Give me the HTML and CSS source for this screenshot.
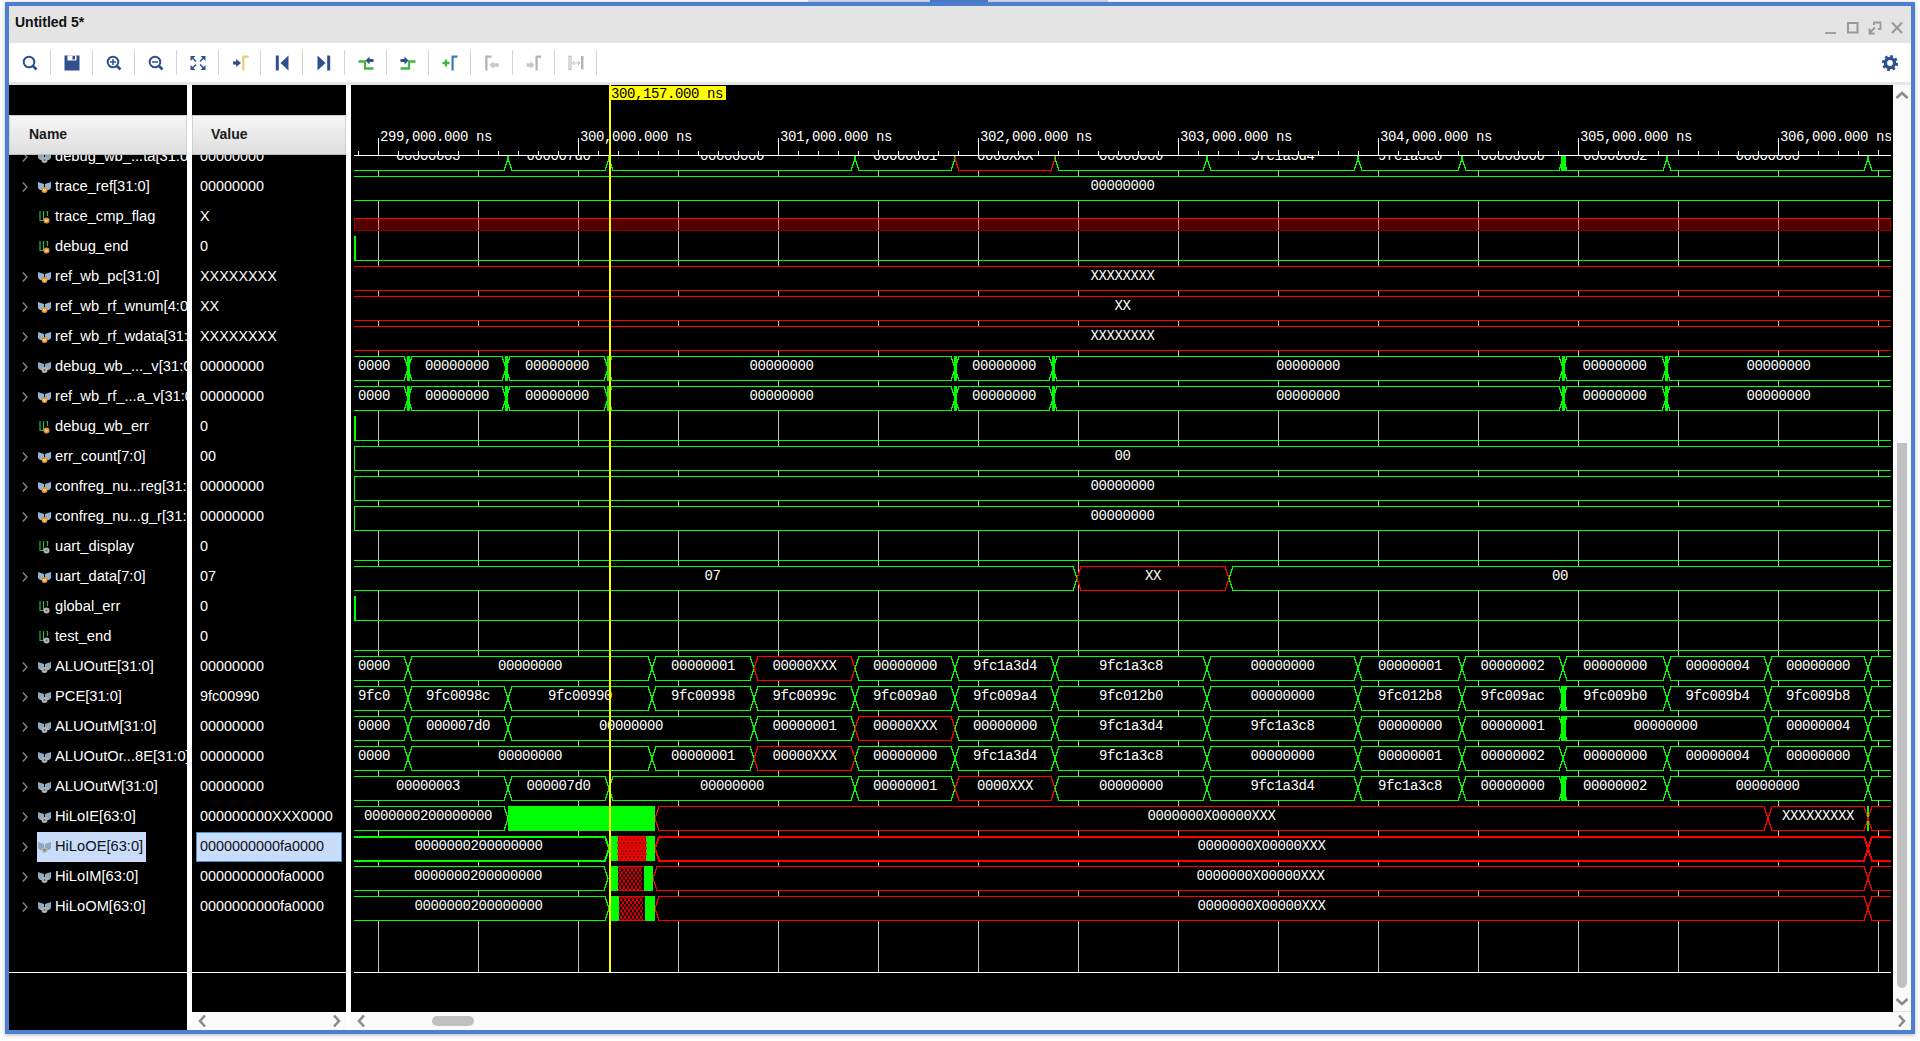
FILE: index.html
```html
<!DOCTYPE html>
<html>
<head>
    <title>Untitled 5*</title>
    <link rel="stylesheet" href="styles.css">
</head>
<body>
    <svg class="defs">
        <symbol id="bus" viewBox="0 0 13 11">
            <path d="M0 0 L6 2 V8 H2 L0 6Z M13 0 L7 2 V8 H11 L13 6Z" fill="#8fb4d4"/>
            <circle cx="6.5" cy="8" r="3" fill="#e8922a"/>
            <path d="M5.3 7 L6.5 9.3 L7.7 7" fill="none" stroke="#fff" stroke-width=".8"/>
        </symbol>
        <symbol id="bus-g" viewBox="0 0 13 11">
            <path d="M0 0 L6 2 V8 H2 L0 6Z M13 0 L7 2 V8 H11 L13 6Z" fill="#8fa8bc"/>
            <circle cx="6.5" cy="8" r="3" fill="#b4b4b4"/>
            <circle cx="6.5" cy="8" r="1" fill="#666"/>
        </symbol>
        <symbol id="bit" viewBox="0 0 13 13">
            <path d="M2 0 V9.5 H5.5 V0 M8 0 H9.5 V5" fill="none" stroke="#35b04a" stroke-width="1.2"/>
            <circle cx="8.5" cy="9.5" r="3" fill="#e8922a"/>
            <path d="M7.3 8.5 L8.5 10.8 L9.7 8.5" fill="none" stroke="#fff" stroke-width=".8"/>
        </symbol>
        <symbol id="bit-g" viewBox="0 0 13 13">
            <path d="M2 0 V9.5 H5.5 V0 M8 0 H9.5 V5" fill="none" stroke="#35b04a" stroke-width="1.2"/>
            <circle cx="8.5" cy="9.5" r="3" fill="#b4b4b4"/>
            <circle cx="8.5" cy="9.5" r="1" fill="#666"/>
        </symbol>
        <symbol id="chev-r" viewBox="0 0 6 10">
            <path d="M.8 .5 L5 5 L.8 9.5" fill="none" stroke="#8a8a8a" stroke-width="1.3"/>
        </symbol>
        <symbol id="sb-l" viewBox="0 0 10 14">
            <path d="M8 1.5 L3 7 L8 12.5" fill="none" stroke="#8a8a8a" stroke-width="2.6"/>
        </symbol>
        <symbol id="sb-r" viewBox="0 0 10 14">
            <path d="M2 1.5 L7 7 L2 12.5" fill="none" stroke="#8a8a8a" stroke-width="2.6"/>
        </symbol>
        <symbol id="sb-u" viewBox="0 0 14 10">
            <path d="M1.5 8 L7 3 L12.5 8" fill="none" stroke="#8a8a8a" stroke-width="2.6"/>
        </symbol>
        <symbol id="sb-d" viewBox="0 0 14 10">
            <path d="M1.5 2 L7 7 L12.5 2" fill="none" stroke="#8a8a8a" stroke-width="2.6"/>
        </symbol>
    </svg>

    <div class="topstrip"><div class="tab"><div class="tab-on"></div></div></div>

    <div class="window">
        <div class="titlebar">
            <span class="title">Untitled 5*</span>
            <svg class="winctl" width="78" height="14" viewBox="0 0 78 14">
                <path d="M0 12 H11" stroke="#a0a0a0" stroke-width="2"/>
                <rect x="23" y="2" width="9.5" height="9.5" fill="none" stroke="#999" stroke-width="2"/>
                <path d="M49 4 V1.5 H55.5 V8 H53 M44.5 12 L50 6.5 M44.5 7.5 V12.5 H49.5" fill="none" stroke="#999" stroke-width="1.8"/>
                <path d="M67 1.5 L77 12 M77 1.5 L67 12" stroke="#999" stroke-width="2"/>
            </svg>
        </div>

        <div class="toolbar">
            <div class="tool"><svg viewBox="0 0 20 20"><circle cx="9" cy="9" r="5.3" class="ic-line"/><path d="M13 13 L16.5 16.5" class="ic-line thick"/></svg></div>
            <div class="tool"><svg viewBox="0 0 20 20"><rect x="2.5" y="2.5" width="15" height="15" fill="#2f4f8f"/><rect x="5.5" y="2.5" width="9" height="5" fill="#fff"/><rect x="10.5" y="3" width="2.5" height="3.5" fill="#2f4f8f"/></svg></div>
            <div class="tool"><svg viewBox="0 0 20 20"><circle cx="9" cy="9" r="5.3" class="ic-line"/><path d="M13 13 L16.5 16.5" class="ic-line thick"/><path d="M6 9 H12 M9 6 V12" class="ic-line thin"/></svg></div>
            <div class="tool"><svg viewBox="0 0 20 20"><circle cx="9" cy="9" r="5.3" class="ic-line"/><path d="M13 13 L16.5 16.5" class="ic-line thick"/><path d="M6 9 H12" class="ic-line thin"/></svg></div>
            <div class="tool"><svg viewBox="0 0 20 20"><path d="M2.5 3 H7.5 L2.5 8Z M17.5 3 H12.5 L17.5 8Z M2.5 17 H7.5 L2.5 12Z M17.5 17 H12.5 L17.5 12Z" fill="#2f4f8f"/><path d="M4 4.5 L8 8.5 M16 4.5 L12 8.5 M4 15.5 L8 11.5 M16 15.5 L12 11.5" class="ic-line thin"/></svg></div>
            <div class="tool"><svg viewBox="0 0 20 20"><path d="M3 8.5 H6 V6 L11 10 L6 14 V11.5 H3Z" fill="#2f4f8f"/><path d="M12.2 2.5 H18.7 V4.8 H14.5 V17.5 H12.2Z" fill="#e8d070"/></svg></div>
            <div class="tool"><svg viewBox="0 0 20 20"><rect x="3.8" y="2.5" width="3" height="15" fill="#2f4f8f"/><path d="M8.5 10 L16.5 2.5 V17.5Z" fill="#2f4f8f"/></svg></div>
            <div class="tool"><svg viewBox="0 0 20 20"><rect x="13.2" y="2.5" width="3" height="15" fill="#2f4f8f"/><path d="M11.5 10 L3.5 2.5 V17.5Z" fill="#2f4f8f"/></svg></div>
            <div class="tool"><svg viewBox="0 0 20 20"><path d="M2.5 8.5 H9 V15.5 H17.5" fill="none" stroke="#44b53c" stroke-width="2.3"/><path d="M9.5 7.5 L13.5 3.5 V6 H17.5 V9 H13.5 V11.5Z" fill="#2f4f8f"/></svg></div>
            <div class="tool"><svg viewBox="0 0 20 20"><path d="M2.5 15.5 H11 V8.5 H17.5" fill="none" stroke="#44b53c" stroke-width="2.3"/><path d="M10.5 7.5 L6.5 3.5 V6 H2.5 V9 H6.5 V11.5Z" fill="#2f4f8f"/></svg></div>
            <div class="tool"><svg viewBox="0 0 20 20"><path d="M2.5 10 H9.5 M6 6.5 V13.5" fill="none" stroke="#44b53c" stroke-width="2.3"/><path d="M11.5 2.5 H17.5 V4.8 H13.7 V17.5 H11.5Z" fill="#3c7db8"/></svg></div>
            <div class="tool"><svg viewBox="0 0 20 20"><path d="M3.2 2.5 H9.5 V4.8 H5.5 V17.5 H3.2Z" fill="#b4b4b4"/><path d="M7.5 12 L11.5 8 V10.3 H16.8 V13.7 H11.5 V16Z" fill="#c8c8c8"/></svg></div>
            <div class="tool"><svg viewBox="0 0 20 20"><path d="M11.5 2.5 H17.2 V4.8 H13.7 V17.5 H11.5Z" fill="#b4b4b4"/><path d="M10.5 12 L6.5 8 V10.3 H2.5 V13.7 H6.5 V16Z" fill="#c8c8c8"/></svg></div>
            <div class="tool"><svg viewBox="0 0 20 20"><rect x="3" y="3.2" width="2" height="13.3" fill="none" stroke="#b4b4b4"/><rect x="15" y="3" width="2.5" height="13.5" fill="#b4b4b4"/><path d="M6.5 10 H14 M8.5 8 L6.5 10 L8.5 12 M12 8 L14 10 L12 12" fill="none" stroke="#c0c0c0"/></svg></div>
            <div class="tool-gear">
                <svg viewBox="0 0 20 20"><circle cx="10" cy="10" r="4.6" fill="none" stroke="#2f4f8f" stroke-width="3.4"/><circle cx="10" cy="10" r="6.8" fill="none" stroke="#2f4f8f" stroke-width="2.6" stroke-dasharray="2.7 2.64"/></svg>
            </div>
        </div>
        <div class="band"></div>

        <div class="main">
            <div class="col col-name">
                <div class="col-top"></div>
                <div class="col-head">Name</div>
                <div class="col-list">
                    <div class="rows">
                        <div class="row"><svg class="chev"><use href="#chev-r"/></svg><span class="lab"><svg class="ico"><use href="#bus-g"/></svg>debug_wb_...ta[31:0]</span></div>
                        <div class="row"><svg class="chev"><use href="#chev-r"/></svg><span class="lab"><svg class="ico"><use href="#bus"/></svg>trace_ref[31:0]</span></div>
                        <div class="row"><span class="chev"></span><span class="lab"><svg class="ico"><use href="#bit"/></svg>trace_cmp_flag</span></div>
                        <div class="row"><span class="chev"></span><span class="lab"><svg class="ico"><use href="#bit"/></svg>debug_end</span></div>
                        <div class="row"><svg class="chev"><use href="#chev-r"/></svg><span class="lab"><svg class="ico"><use href="#bus"/></svg>ref_wb_pc[31:0]</span></div>
                        <div class="row"><svg class="chev"><use href="#chev-r"/></svg><span class="lab"><svg class="ico"><use href="#bus"/></svg>ref_wb_rf_wnum[4:0]</span></div>
                        <div class="row"><svg class="chev"><use href="#chev-r"/></svg><span class="lab"><svg class="ico"><use href="#bus"/></svg>ref_wb_rf_wdata[31:0]</span></div>
                        <div class="row"><svg class="chev"><use href="#chev-r"/></svg><span class="lab"><svg class="ico"><use href="#bus-g"/></svg>debug_wb_..._v[31:0]</span></div>
                        <div class="row"><svg class="chev"><use href="#chev-r"/></svg><span class="lab"><svg class="ico"><use href="#bus"/></svg>ref_wb_rf_...a_v[31:0]</span></div>
                        <div class="row"><span class="chev"></span><span class="lab"><svg class="ico"><use href="#bit"/></svg>debug_wb_err</span></div>
                        <div class="row"><svg class="chev"><use href="#chev-r"/></svg><span class="lab"><svg class="ico"><use href="#bus"/></svg>err_count[7:0]</span></div>
                        <div class="row"><svg class="chev"><use href="#chev-r"/></svg><span class="lab"><svg class="ico"><use href="#bus"/></svg>confreg_nu...reg[31:0]</span></div>
                        <div class="row"><svg class="chev"><use href="#chev-r"/></svg><span class="lab"><svg class="ico"><use href="#bus"/></svg>confreg_nu...g_r[31:0]</span></div>
                        <div class="row"><span class="chev"></span><span class="lab"><svg class="ico"><use href="#bit-g"/></svg>uart_display</span></div>
                        <div class="row"><svg class="chev"><use href="#chev-r"/></svg><span class="lab"><svg class="ico"><use href="#bus"/></svg>uart_data[7:0]</span></div>
                        <div class="row"><span class="chev"></span><span class="lab"><svg class="ico"><use href="#bit-g"/></svg>global_err</span></div>
                        <div class="row"><span class="chev"></span><span class="lab"><svg class="ico"><use href="#bit-g"/></svg>test_end</span></div>
                        <div class="row"><svg class="chev"><use href="#chev-r"/></svg><span class="lab"><svg class="ico"><use href="#bus-g"/></svg>ALUOutE[31:0]</span></div>
                        <div class="row"><svg class="chev"><use href="#chev-r"/></svg><span class="lab"><svg class="ico"><use href="#bus-g"/></svg>PCE[31:0]</span></div>
                        <div class="row"><svg class="chev"><use href="#chev-r"/></svg><span class="lab"><svg class="ico"><use href="#bus-g"/></svg>ALUOutM[31:0]</span></div>
                        <div class="row"><svg class="chev"><use href="#chev-r"/></svg><span class="lab"><svg class="ico"><use href="#bus-g"/></svg>ALUOutOr...8E[31:0]</span></div>
                        <div class="row"><svg class="chev"><use href="#chev-r"/></svg><span class="lab"><svg class="ico"><use href="#bus-g"/></svg>ALUOutW[31:0]</span></div>
                        <div class="row"><svg class="chev"><use href="#chev-r"/></svg><span class="lab"><svg class="ico"><use href="#bus-g"/></svg>HiLoIE[63:0]</span></div>
                        <div class="row"><svg class="chev"><use href="#chev-r"/></svg><span class="lab selected"><svg class="ico"><use href="#bus-g"/></svg>HiLoOE[63:0]</span></div>
                        <div class="row"><svg class="chev"><use href="#chev-r"/></svg><span class="lab"><svg class="ico"><use href="#bus-g"/></svg>HiLoIM[63:0]</span></div>
                        <div class="row"><svg class="chev"><use href="#chev-r"/></svg><span class="lab"><svg class="ico"><use href="#bus-g"/></svg>HiLoOM[63:0]</span></div>
                    </div>
                </div>
                <div class="col-foot"></div>
            </div>

            <div class="col col-value">
                <div class="col-top"></div>
                <div class="col-head">Value</div>
                <div class="col-list">
                    <div class="rows">
                        <div class="val">00000000</div>
                        <div class="val">00000000</div>
                        <div class="val">X</div>
                        <div class="val">0</div>
                        <div class="val">XXXXXXXX</div>
                        <div class="val">XX</div>
                        <div class="val">XXXXXXXX</div>
                        <div class="val">00000000</div>
                        <div class="val">00000000</div>
                        <div class="val">0</div>
                        <div class="val">00</div>
                        <div class="val">00000000</div>
                        <div class="val">00000000</div>
                        <div class="val">0</div>
                        <div class="val">07</div>
                        <div class="val">0</div>
                        <div class="val">0</div>
                        <div class="val">00000000</div>
                        <div class="val">9fc00990</div>
                        <div class="val">00000000</div>
                        <div class="val">00000000</div>
                        <div class="val">00000000</div>
                        <div class="val">000000000XXX0000</div>
                        <div class="val selected">0000000000fa0000</div>
                        <div class="val">0000000000fa0000</div>
                        <div class="val">0000000000fa0000</div>
                    </div>
                </div>
                <div class="col-foot"></div>
                <div class="hscroll hscroll-val">
                    <svg class="sb-h"><use href="#sb-l"/></svg>
                    <svg class="sb-h"><use href="#sb-r"/></svg>
                </div>
            </div>

            <div class="col col-wave">
                <svg id="wave" width="1542" height="927" viewBox="351 85 1542 927"></svg>
                <div class="hscroll hscroll-wave">
                    <svg class="sb-h"><use href="#sb-l"/></svg>
                    <div class="thumb-h"></div>
                </div>
            </div>

            <div class="vscroll">
                <svg class="sb-v"><use href="#sb-u"/></svg>
                <div class="thumb-v"></div>
                <svg class="sb-v sb-down"><use href="#sb-d"/></svg>
                <div class="corner"><svg class="sb-h"><use href="#sb-r"/></svg></div>
            </div>
        </div>
    </div>

    <script src="wave.js"></script>
</body>
</html>
```
FILE: styles.css
```css
* {
    margin: 0;
    padding: 0;
    box-sizing: border-box;
}

html, body {
    width: 100%;
    height: 100%;
    overflow: hidden;
}

body {
    background-color: #ffffff;
    font-family: "Liberation Sans", Arial, sans-serif;
    font-size: 14px;
}

.defs {
    display: none;
}

.topstrip {
    height: 2px;
}

.tab {
    width: 300px;
    height: 2px;
    margin-left: 808px;
    background-color: #d4dcec;
}

.tab-on {
    width: 58px;
    height: 2px;
    margin-left: 122px;
    background-color: #4a7fd0;
}

.window {
    width: 1910px;
    height: 1032px;
    margin-left: 5px;
    border: 4px solid #4c7fd0;
    display: flex;
    flex-direction: column;
    box-shadow: 0 1px 4px rgba(0, 0, 0, 0.3);
}

.titlebar {
    height: 37px;
    flex: none;
    background-color: #e4e4e4;
    display: flex;
    justify-content: space-between;
    padding: 0 8px 0 6px;
}

.title {
    line-height: 32px;
    font-weight: bold;
    color: #111111;
}

.winctl {
    margin-top: 15px;
}

.toolbar {
    height: 39px;
    flex: none;
    background-color: #ffffff;
    display: flex;
    align-items: center;
}

.tool {
    width: 42px;
    height: 25px;
    flex: none;
    border-right: 1px solid #d4d4d4;
    display: flex;
    align-items: center;
    justify-content: center;
}

.tool svg, .tool-gear svg {
    width: 20px;
    height: 20px;
    flex: none;
}

.tool-gear {
    margin-left: auto;
    margin-right: 11px;
    height: 20px;
}

.ic-line {
    fill: none;
    stroke: #2f4f8f;
    stroke-width: 2;
}

.ic-line.thick {
    stroke-width: 2.6;
}

.ic-line.thin {
    stroke-width: 1.5;
}

.band {
    height: 3px;
    flex: none;
    background-color: #e6e6e6;
}

.main {
    flex: 1;
    min-height: 0;
    display: flex;
    background-color: #ffffff;
}

.col {
    display: flex;
    flex-direction: column;
    flex: none;
}

.col-name {
    width: 178px;
    margin-right: 5px;
    background-color: #000000;
}

.col-value {
    width: 154px;
    margin-right: 5px;
    background-color: #000000;
}

.col-wave {
    width: 1542px;
    background-color: #000000;
}

.col-top {
    height: 30px;
    flex: none;
}

.col-head {
    height: 40px;
    flex: none;
    line-height: 36px;
    font-weight: bold;
    color: #1a1a1a;
    background: linear-gradient(#f6f6f6, #dedede);
    border: 1px solid #d0d0d0;
    border-bottom-color: #bdbdbd;
}

.col-name .col-head {
    padding-left: 19px;
}

.col-value .col-head {
    padding-left: 18px;
}

.col-list {
    height: 817px;
    flex: none;
    overflow: hidden;
}

.rows {
    margin-top: -13px;
    color: #ffffff;
}

.col-foot {
    flex: 1;
    border-top: 1px solid #ffffff;
}

.row {
    height: 30px;
    display: flex;
    align-items: center;
    white-space: nowrap;
    font-size: 14.7px;
}

.chev {
    width: 6px;
    height: 10px;
    flex: none;
    margin-left: 13px;
}

.lab {
    height: 30px;
    margin-left: 9px;
    padding: 0 3px 2px 1px;
    display: flex;
    align-items: center;
}

.lab.selected {
    background-color: #c9ddfb;
    color: #111111;
}

.ico {
    width: 13px;
    height: 13px;
    flex: none;
    margin-top: 2px;
    margin-right: 4px;
}

.val {
    height: 30px;
    line-height: 28px;
    padding-left: 8px;
    font-size: 14.4px;
    white-space: nowrap;
}

.val.selected {
    margin: 0 4px;
    padding-left: 3px;
    line-height: 26px;
    background-color: #c9ddfb;
    border: 1px solid #4a90d0;
    color: #111111;
}

#wave {
    display: block;
    flex: none;
    font-family: "Liberation Mono", monospace;
    font-size: 14px;
}

.hscroll {
    height: 18px;
    flex: none;
    background-color: #fafafa;
    display: flex;
    align-items: center;
}

.hscroll-val {
    justify-content: space-between;
    padding: 0 4px 0 5px;
}

.hscroll-wave {
    padding-left: 5px;
}

.sb-h {
    width: 10px;
    height: 14px;
    flex: none;
}

.thumb-h {
    width: 42px;
    height: 10px;
    margin-left: 66px;
    border-radius: 5px;
    background-color: #c0c0c0;
}

.vscroll {
    width: 18px;
    flex: none;
    background-color: #fafafa;
    display: flex;
    flex-direction: column;
    align-items: center;
}

.sb-v {
    width: 14px;
    height: 10px;
    flex: none;
    margin-top: 5px;
}

.thumb-v {
    width: 10px;
    height: 547px;
    margin-top: 343px;
    border-radius: 0 0 5px 5px;
    background-color: #c0c0c0;
}

.sb-down {
    margin-top: 9px;
}

.corner {
    margin-top: 4px;
    width: 18px;
    height: 19px;
    border-top: 1px solid #e4e4e4;
    display: flex;
    align-items: center;
    justify-content: center;
}
```
FILE: wave.js
```js
const wave = document.getElementById('wave');
const GREEN = '#00ff00';
const RED = '#ff0000';
const LEFT = 354;
const RIGHT = 1891;
let out = '';

function rect(x, y, w, h, fill) {
    out += `<rect x="${x}" y="${y}" width="${w}" height="${h}" fill="${fill}" shape-rendering="crispEdges"/>`;
}

function line(x1, y1, x2, y2, color) {
    out += `<path d="M${x1} ${y1} L${x2} ${y2}" stroke="${color}" shape-rendering="crispEdges"/>`;
}

function label(x, y, text, color, anchor) {
    out += `<text x="${x}" y="${y}" fill="${color}" text-anchor="${anchor}" letter-spacing="-0.4">${text}</text>`;
}

// one hexagon of a bus signal, t0 / t1 are the crossing points
function seg(c, t0, t1, text, color, width, closed) {
    const top = c - 10.5;
    const bot = c + 13.5;
    const mid = c + 1.5;
    const l = t0 === null ? LEFT : t0 + 4;
    const r = t1 === null ? RIGHT : t1 - 4;
    let d = `M${l} ${top} L${r} ${top}`;
    d += t1 === null ? ` M${r} ${bot}` : ` L${t1} ${mid} L${r} ${bot}`;
    d += ` L${l} ${bot}`;
    if (t0 !== null) d += ` L${t0} ${mid} L${l} ${top}`;
    if (closed) d += ` L${l} ${top}`;
    out += `<path d="M${l} ${top} L${r} ${top} L${t1 === null ? r : t1} ${mid} L${r} ${bot} L${l} ${bot} L${t0 === null ? l : t0} ${mid}Z" fill="#000"/>`;
    out += `<path d="${d}" fill="none" stroke="${color}" stroke-width="${width}" shape-rendering="crispEdges"/>`;
    if (text) {
        let cx = ((t0 === null ? 348 : t0) + (t1 === null ? RIGHT : t1)) / 2;
        if (closed || (t0 === null && t1 === null)) cx = (LEFT + RIGHT) / 2;
        if (t0 === null && text.length === 4) cx = 374;
        label(cx, c + 3, text, '#fff', 'middle');
    }
}

// times are the crossings, labels has one entry more. null leaves a gap for a solid block
function bus(c, times, labels, opts) {
    const o = opts || {};
    for (let i = 0; i < labels.length; i++) {
        if (labels[i] === null) continue;
        const t0 = i === 0 ? null : times[i - 1];
        const t1 = i === times.length ? null : times[i];
        let color = /X/.test(labels[i]) ? RED : GREEN;
        if (labels[i] === '' && o.tail) color = o.tail;
        seg(c, t0, t1, labels[i], color, o.width || 1, o.closed);
    }
    const tw = o.thickWidth || 5;
    (o.thick || []).forEach(t => {
        rect(t - tw / 2, c - 11, tw, 25, GREEN);
    });
}

function flat(c, bar) {
    line(LEFT, c + 13.5, RIGHT, c + 13.5, GREEN);
    if (bar) rect(LEFT, c - 11, 2, 25, GREEN);
}

function hatch(c, x0, x1, width) {
    const top = c - 10.5;
    const bot = c + 13.5;
    rect(x0, c - 11, x1 - x0, 25, '#000');
    for (let x = x0; x < x1 - 3; x += 4) {
        out += `<path d="M${x} ${top} L${x + 4} ${c - 4} L${x} ${c + 1} L${x + 4} ${c + 7} L${x} ${bot} M${x + 4} ${top} L${x} ${c - 4} L${x + 4} ${c + 1} L${x} ${c + 7} L${x + 4} ${bot}" fill="none" stroke="${RED}" stroke-width="${width}"/>`;
    }
    line(x0, top, x1, top, RED);
    line(x0, bot, x1, bot, RED);
}

// grid behind everything
for (let x = 378; x <= 1878; x += 100) {
    rect(x, 156, 1, 816, '#c4c4c4');
}

const Z = '00000000';
const tE = [408, 652, 754, 855, 955, 1055, 1207, 1358, 1462, 1563, 1667, 1768, 1868];
const lE = ['0000', Z, '00000001', '00000XXX', Z, '9fc1a3d4', '9fc1a3c8', Z, '00000001', '00000002', Z, '00000004', Z, ''];
const tW = [508, 609, 855, 955, 1055, 1207, 1358, 1462, 1563, 1667, 1868];
const lW = ['00000003', '000007d0', Z, '00000001', '0000XXX', Z, '9fc1a3d4', '9fc1a3c8', Z, '00000002', Z, ''];
const tV = [408, 506, 608, 955, 1053, 1563, 1666];
const lV = ['0000', Z, Z, Z, Z, Z, Z, Z];
const HI = '0000000X00000XXX';
const LO = '0000000200000000';

bus(157, tW, lW, { thick: [1563] });
bus(187, [], [Z]);
// trace_cmp_flag is X, line on top and dark fill under it
rect(355, 218, 1535, 13, 'rgba(255,0,0,0.32)');
out += `<rect x="354.5" y="218.5" width="1536" height="12" fill="none" stroke="#8c0000" shape-rendering="crispEdges"/>`;
line(LEFT, 218.5, RIGHT, 218.5, RED);
flat(247, true);
bus(277, [], ['XXXXXXXX']);
bus(307, [], ['XX']);
bus(337, [], ['XXXXXXXX']);
bus(367, tV, lV, { thick: tV, thickWidth: 3 });
bus(397, tV, lV, { thick: tV, thickWidth: 3 });
flat(427, true);
bus(457, [], ['00'], { closed: true });
bus(487, [], [Z], { closed: true });
bus(517, [], [Z], { closed: true });
flat(547);
bus(577, [1077, 1229], ['07', 'XX', '00']);
flat(607, true);
flat(637);
bus(667, tE, lE);
bus(697, [408, 508, 652, 754, 855, 955, 1055, 1207, 1358, 1462, 1563, 1667, 1768, 1868],
    ['9fc0', '9fc0098c', '9fc00990', '9fc00998', '9fc0099c', '9fc009a0', '9fc009a4', '9fc012b0', Z, '9fc012b8', '9fc009ac', '9fc009b0', '9fc009b4', '9fc009b8', ''],
    { thick: [1563] });
bus(727, [408, 508, 754, 855, 955, 1055, 1207, 1358, 1462, 1563, 1768, 1868],
    ['0000', '000007d0', Z, '00000001', '00000XXX', Z, '9fc1a3d4', '9fc1a3c8', Z, '00000001', Z, '00000004', ''],
    { thick: [1563] });
bus(757, tE, lE);
bus(787, tW, lW, { thick: [1563] });

bus(817, [508, 655, 1768, 1868], [LO, null, HI, 'XXXXXXXXX', ''], { tail: RED });
rect(508, 806, 147, 25, GREEN);
rect(1867, 806, 2, 25, GREEN);
rect(1867, 817, 2, 4, RED);

bus(847, [609, 655, 1868], [LO, null, HI, ''], { tail: RED, width: 2 });
rect(611, 836, 44, 25, GREEN);
hatch(847, 618, 646, 2);
bus(877, [608, 653, 1868], [LO, null, HI, ''], { tail: RED });
rect(609, 866, 44, 25, GREEN);
hatch(877, 618, 644, 1);
bus(907, [609, 655, 1868], [LO, null, HI, ''], { tail: RED });
rect(610, 896, 45, 25, GREEN);
hatch(907, 619, 645, 1);

// timeline over the top, the first row is cut off by it
rect(351, 85, 1542, 70, '#000');
rect(LEFT, 155, RIGHT - LEFT, 1, '#fff');
for (let x = 358; x < RIGHT; x += 20) {
    const h = (x - 378) % 100 === 0 ? 5 : 4;
    rect(x, 155 - h, 1, h, '#fff');
}
for (let i = 0; i < 8; i++) {
    const x = 378 + i * 200;
    rect(x, 138, 1, 17, '#fff');
    label(x + 2, 141, `${299 + i},000.000 ns`, '#fff', 'start');
}
rect(LEFT, 972, RIGHT - LEFT, 1, '#fff');
rect(RIGHT, 85, 2, 927, '#000');

// cursor
rect(609, 85, 2, 887, '#ffff00');
rect(609, 86, 117, 14, '#ffff00');
label(611, 98, '300,157.000 ns', '#000', 'start');

wave.innerHTML = out;
```
